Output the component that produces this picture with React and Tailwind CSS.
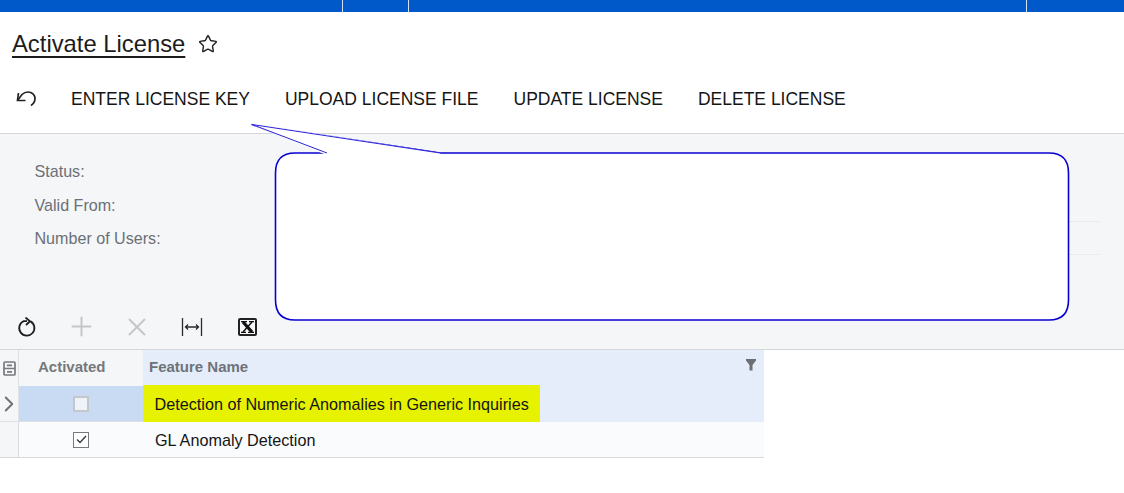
import { ChevronRight, Plus, Star, X } from "lucide-react";

const acciones = ["ENTER LICENSE KEY", "UPLOAD LICENSE FILE", "UPDATE LICENSE", "DELETE LICENSE"];

function Campo({ label, linea }) {
  return (
    <div className="flex h-[33.500px] items-center pl-[34.500px] pr-[24px]">
      <span className="w-[240.500px] text-[16.100px] text-[#6b7076]">{label}</span>
      <div className={`h-[33.800px] flex-1 self-start ${linea ? "border-b border-dotted border-[#dcdfe3]" : ""}`} />
    </div>
  );
}

function Callout() {
  return (
    <svg className="absolute left-[250px] top-[122px]" width="822" height="201" viewBox="250 122 822 201">
      <path
        d="M295 153 H327 L252 124.500 L440 153 H1049 Q1068.500 153 1068.500 173 V300 Q1068.500 320 1049 320 H295 Q275.500 320 275.500 300 V173 Q275.500 153 295 153 Z"
        fill="#ffffff"
        stroke="#0a00d2"
        strokeWidth="1.600"
        strokeLinejoin="round"
      />
      <path d="M328 153 H438 M327 154 L252 124 L440 154 Z" fill="#ffffff" stroke="#ffffff" strokeWidth="2" />
      <path d="M327 153 L252 124.500 L440 153" fill="none" stroke="#2a22d8" strokeWidth="1" />
    </svg>
  );
}

export default function App() {
  return (
    <div className="relative h-[493px] w-[1124px] overflow-hidden bg-white font-['Liberation_Sans',Arial,sans-serif] text-[#1c1c1c]">
      {/* Barra superior */}
      <div className="flex h-[12px] bg-[#0059c9]">
        <div className="w-[343px] border-r border-[#d5e3f6]" />
        <div className="w-[66px] border-r border-[#d5e3f6]" />
        <div className="w-[618px] border-r border-[#d5e3f6]" />
      </div>

      {/* Título */}
      <div className="flex h-[64px] items-center pl-[12px]">
        <h1 className="text-[23.800px] leading-[28px] underline decoration-[1.500px] underline-offset-[4px]">Activate License</h1>
        <Star size={20} strokeWidth={1.700} className="ml-[13px] text-[#222222]" />
      </div>

      {/* Acciones */}
      <div className="flex h-[58px] items-start border-b border-[#d4d6d9] pl-[16px]">
        <div className="flex h-[46px] items-center">
          <svg width="20" height="20" viewBox="0 0 20 20" fill="none" stroke="#222222" strokeWidth="1.700">
            <path d="M2.500 4 L1.500 11.500 L9.500 11.500" />
            <path d="M1.500 11.500 L6 5.500 C8 3.500 10 3 12 3 C16 3 19 6 19 9.500 C19 12.500 17.500 14.800 15 16.500" />
          </svg>
        </div>
        <div className="ml-[35px] flex h-[46px] items-center gap-[35px]">
          {acciones.map((a) => (
            <span key={a} className="text-[17.500px] leading-[22px] text-[#151515]">
              {a}
            </span>
          ))}
        </div>
      </div>

      {/* Formulario */}
      <div className="h-[216px] border-b border-[#d4d6d9] bg-[#f5f6f8]">
        <div className="pt-[20.400px]">
          <Campo label="Status:" />
          <Campo label="Valid From:" linea />
          <Campo label="Number of Users:" linea />
        </div>
        <div className="mt-[56.600px] flex h-[31px] items-center pl-[17px]">
          <svg width="20" height="20" viewBox="0 0 20 20" fill="none" stroke="#1f1f1f" strokeWidth="1.800">
            <path d="M13.500 4.400 A7.600 7.600 0 1 1 6.500 4.200 L10 4.200" />
            <path d="M8.500 0.500 L13 4.200 L9 8" />
          </svg>
          <Plus size={31} strokeWidth={1.500} className="ml-[28.500px] text-[#c4c6c9]" />
          <X size={30} strokeWidth={1.500} className="ml-[25px] text-[#c4c6c9]" />
          <svg width="22" height="20" viewBox="0 0 22 20" fill="none" stroke="#2a2a2a" strokeWidth="1.300" className="ml-[29.500px]">
            <path d="M1.500 1 V19 M20.500 1 V19 M4.500 10 H17.500 M7 7.500 L4.500 10 L7 12.500 M15 7.500 L17.500 10 L15 12.500" />
          </svg>
          <div className="ml-[34.500px] flex h-[18px] w-[19px] items-center justify-center rounded-[2px] border-2 border-[#222222]">
            <svg width="13" height="12" viewBox="0 0 13 12" stroke="#111111" fill="none">
              <path d="M2 1 L11 11" strokeWidth="3.200" />
              <path d="M11 1 L2 11" strokeWidth="1.500" />
              <path d="M0 0.700 H6 M8 0.700 H13 M0 11.300 H5 M7 11.300 H13" strokeWidth="1.300" />
            </svg>
          </div>
        </div>
      </div>

      {/* Tabla */}
      <div className="grid w-[764px] grid-cols-[19px_124px_1fr] text-[16.200px]">
        <div className="flex h-[36px] items-center justify-center border-r border-[#dfe1e4] bg-[#f5f6f8]">
          <svg width="13" height="15" viewBox="0 0 13 15" fill="none" stroke="#777a7e" strokeWidth="1.700">
            <rect x="1" y="1" width="11" height="13" rx="1" />
            <path d="M1 7.500 H12 M4 4.300 H9 M4 10.800 H9" />
          </svg>
        </div>
        <div className="flex h-[36px] items-center bg-[#f5f6f8] pb-[2px] pl-[19px] text-[15px] font-bold text-[#75787c]">Activated</div>
        <div className="flex h-[36px] items-center justify-between bg-[#e4edf9] pb-[2px] pl-[6px] pr-[8px] text-[15px] font-bold text-[#6e7279]">
          Feature Name
          <svg width="10" height="12" viewBox="0 0 10 12" className="mb-[5px]" fill="#6b6e73">
            <path d="M0 0 H10 V1.500 L6.500 6 V11.500 H3.500 V6 L0 1.500 Z" />
          </svg>
        </div>

        <div className="flex h-[36px] items-center justify-center border-r border-b border-[#dfe1e4] bg-[#f5f6f8]">
          <ChevronRight size={26} strokeWidth={1.800} className="shrink-0 text-[#6f7276]" />
        </div>
        <div className="flex h-[36px] items-center justify-center border-b border-[#dfe1e4] bg-[#c8dbf3]">
          <div className="h-[16px] w-[16px] border-2 border-[#c3c6ca] bg-[#eef2f9]" />
        </div>
        <div className="flex h-[36px] items-start bg-[#e4edf9]">
          <div className="-ml-[0.500px] -mt-[1px] flex h-[37px] w-[397.500px] items-center bg-[#e6f200] pl-[12px] pt-[1px] text-[#151515]">
            Detection of Numeric Anomalies in Generic Inquiries
          </div>
        </div>

        <div className="h-[36px] border-r border-b border-[#d8dadd] bg-[#f5f6f8]" />
        <div className="flex h-[36px] items-center justify-center border-b border-[#d8dadd] bg-[#fafbfd]">
          <div className="flex h-[16px] w-[16px] items-center justify-center border border-[#77797c] bg-white">
            <svg width="11" height="9" viewBox="0 0 11 9" fill="none" stroke="#3b3b3b" strokeWidth="1.400">
              <path d="M1 4.500 L4 7.500 L10 1" />
            </svg>
          </div>
        </div>
        <div className="flex h-[36px] items-center border-b border-[#d8dadd] bg-[#fafbfd] pl-[12px] pt-[1px] text-[#151515]">GL Anomaly Detection</div>
      </div>

      <Callout />
    </div>
  );
}
